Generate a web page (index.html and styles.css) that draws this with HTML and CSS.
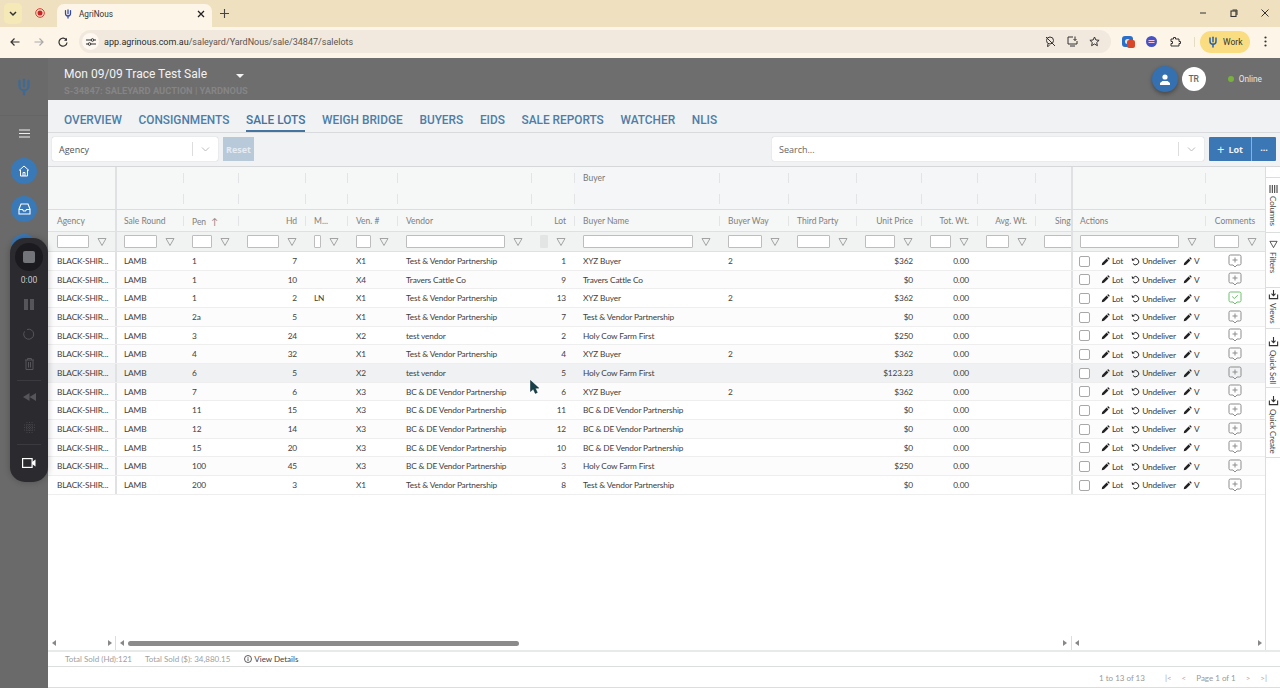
FILE: index.html
```html
<!DOCTYPE html>
<html lang="en">
<head>
<meta charset="utf-8">
<title>AgriNous</title>
<link rel="stylesheet" href="styles.css">
</head>
<body>
<svg class="defs" aria-hidden="true">
  <symbol id="pw" viewBox="0 0 16 16"><path d="M8 1.5v6" fill="none" stroke="currentColor" stroke-width="2" stroke-linecap="round"/><path d="M4 2.5v4.5a4 4 0 0 0 8 0V2.5" fill="none" stroke="currentColor" stroke-width="2" stroke-linecap="round"/><path d="M8 11v3.5" stroke="currentColor" stroke-width="2" stroke-linecap="round"/></symbol>
  <symbol id="pencil" viewBox="0 0 12 12"><path d="M1 11l.6-3 5.9-5.9 2.4 2.4L4 10.4z M8.2 1.4l.8-.7a.8.8 0 0 1 1.1 0l1.2 1.2a.8.8 0 0 1 0 1.1l-.7.8z" fill="currentColor"/></symbol>
  <symbol id="undo" viewBox="0 0 12 12"><path d="M3.2 3.2A4.2 4.2 0 1 1 2.6 8.6" fill="none" stroke="currentColor" stroke-width="1.3"/><path d="M1 1.2l.3 3.7 3.6-.4z" fill="currentColor"/></symbol>
  <symbol id="cmt" viewBox="0 0 14 14"><path d="M2.5 1h9A1.5 1.5 0 0 1 13 2.5v7a1.5 1.5 0 0 1-1.500 1.500H9l-2 2-2-2H2.500A1.500 1.500 0 0 1 1 9.500v-7A1.500 1.500 0 0 1 2.500 1z" fill="none" stroke="currentColor"/><path d="M7 3.500v5M4.500 6h5" stroke="currentColor" fill="none"/></symbol>
  <symbol id="cmtok" viewBox="0 0 14 14"><path d="M2.500 1h9A1.500 1.500 0 0 1 13 2.500v7a1.500 1.500 0 0 1-1.500 1.500H9l-2 2-2-2H2.500A1.500 1.500 0 0 1 1 9.500v-7A1.500 1.500 0 0 1 2.500 1z" fill="none" stroke="currentColor"/><path d="M4.200 5.500L6.300 7.500 9.800 4.200" stroke="currentColor" fill="none"/></symbol>
  <symbol id="fun" viewBox="0 0 10 10"><path d="M1 1.500h8L5 8.500z" fill="none" stroke="currentColor" stroke-width=".9"/></symbol>
  <symbol id="tray" viewBox="0 0 12 12"><path d="M6 1v6M3.800 5L6 7.200 8.200 5" fill="none" stroke="currentColor" stroke-width="1.200"/><path d="M1.500 6v4.500h9V6" fill="none" stroke="currentColor" stroke-width="1.200"/></symbol>
</svg>

<header class="chrome">
  <div class="tabstrip">
    <span class="tabmenu"><svg width="8" height="6" viewBox="0 0 8 6"><path d="M1 1l3 3 3-3" fill="none" stroke="#333" stroke-width="1.500"/></svg></span>
    <span class="rec"><svg width="10" height="10" viewBox="0 0 10 10"><circle cx="5" cy="5" r="4.300" fill="none" stroke="#d33" /><circle cx="5" cy="5" r="2.500" fill="#c8242a"/></svg></span>
    <div class="tab">
      <svg class="tabicon"><use href="#pw"/></svg>
      <span class="tabtitle">AgriNous</span>
      <svg class="tabx" width="8" height="8" viewBox="0 0 8 8"><path d="M1 1l6 6M7 1l-6 6" stroke="#222" stroke-width="1.300"/></svg>
    </div>
    <svg class="newtab" width="9" height="9" viewBox="0 0 9 9"><path d="M4.500 0v9M0 4.500h9" stroke="#444" stroke-width="1.100"/></svg>
    <div class="winbtns">
      <svg width="8" height="8" viewBox="0 0 8 8"><path d="M1 4h6" stroke="#333"/></svg>
      <svg width="8" height="8" viewBox="0 0 8 8"><rect x="1" y="2" width="5" height="5.500" fill="none" stroke="#333" stroke-width="1.100"/><path d="M2.500 1h4.500v5" fill="none" stroke="#333"/></svg>
      <svg width="8" height="8" viewBox="0 0 8 8"><path d="M.5.500l7 7M7.500.500l-7 7" stroke="#333"/></svg>
    </div>
  </div>
  <div class="toolbar">
    <svg class="nb" width="10" height="10" viewBox="0 0 10 10"><path d="M9.500 5H1M4.500 1.500L1 5l3.500 3.500" fill="none" stroke="#333" stroke-width="1.200"/></svg>
    <svg class="nb fwd" width="10" height="10" viewBox="0 0 10 10"><path d="M.500 5H9M5.500 1.500L9 5 5.500 8.500" fill="none" stroke="#aaa" stroke-width="1.200"/></svg>
    <svg class="nb rel" width="10" height="10" viewBox="0 0 10 10"><path d="M8.500 3.200A4 4 0 1 0 9 5.500" fill="none" stroke="#333" stroke-width="1.200"/><path d="M9 .800v3H6z" fill="#333"/></svg>
    <div class="omni">
      <span class="tune"><svg width="10" height="8" viewBox="0 0 10 8"><path d="M0 2h5M8 2h2M0 6h2M5 6h5" stroke="#333"/><circle cx="6.500" cy="2" r="1.300" fill="none" stroke="#333"/><circle cx="3.500" cy="6" r="1.300" fill="none" stroke="#333"/></svg></span>
      <span class="url"><b>app.agrinous.com.au</b>/saleyard/YardNous/sale/34847/salelots</span>
      <span class="omni-icons">
        <svg width="11" height="11" viewBox="0 0 11 11"><circle cx="5" cy="4.500" r="3.500" fill="none" stroke="#333"/><path d="M1 1l9 9M3 8l-.5 2.500 2-1" fill="none" stroke="#333"/></svg>
        <svg width="11" height="11" viewBox="0 0 11 11"><path d="M6 1H1v7h9V5M3 10h5" fill="none" stroke="#333"/><path d="M8 .500v4M6.500 3L8 4.500 9.500 3" fill="none" stroke="#333"/></svg>
        <svg width="11" height="11" viewBox="0 0 11 11"><path d="M5.500 1l1.400 3 3.200.3-2.400 2.200.7 3.200-2.900-1.700-2.900 1.700.7-3.200L.9 4.300 4.100 4z" fill="none" stroke="#333"/></svg>
      </span>
    </div>
    <div class="exts">
      <span class="ext1"><i class="extdot"></i><i class="badge"></i></span>
      <span class="ext2"><svg width="11" height="11" viewBox="0 0 11 11"><path d="M2.500 4.500h6M2.500 6.500h6" stroke="#f3c6d8" stroke-width="1.100"/></svg></span>
      <svg width="11" height="11" viewBox="0 0 11 11"><path d="M1 3h2.500V1.500h2V3H9v2.500h1.500v2H9V10H1V7.500h1.500v-2H1z" fill="none" stroke="#333"/></svg>
      <span class="tbsep"></span>
      <span class="work"><svg width="12" height="14"><use href="#pw"/></svg>Work</span>
      <svg class="dots" width="3" height="11" viewBox="0 0 3 11"><circle cx="1.500" cy="1.500" r="1.100" fill="#333"/><circle cx="1.500" cy="5.500" r="1.100" fill="#333"/><circle cx="1.500" cy="9.500" r="1.100" fill="#333"/></svg>
    </div>
  </div>
</header>

<div class="app">
  <aside class="side">
    <div class="side-logo"><svg width="18" height="20"><use href="#pw"/></svg></div>
    <svg class="burger" width="11" height="9" viewBox="0 0 11 9"><path d="M0 1h11M0 4.500h11M0 8h11" stroke="#eee" stroke-width="1"/></svg>
    <span class="sidebtn"><svg width="12" height="12" viewBox="0 0 12 12"><path d="M1 5.500L6 1l5 4.500M2.500 5v6h7V5M5 11V7.500h2V11" fill="none" stroke="#fff"/></svg></span>
    <span class="sidebtn"><svg width="13" height="12" viewBox="0 0 13 12"><path d="M3 1h7l2 5v5H1V6zM1 6.500h3.500l1 1.500h2l1-1.500H12" fill="none" stroke="#fff" stroke-width="1.100"/></svg></span>
    <span class="sidebtn"></span>
  </aside>

  <main class="main">
    <section class="salehead">
      <div class="saletitle">
        <div class="titleline"><span>Mon 09/09 Trace Test Sale</span><i class="caret"></i></div>
        <div class="subtitle">S-34847: SALEYARD AUCTION | YARDNOUS</div>
      </div>
      <div class="headright">
        <span class="userbtn"><svg width="10" height="11" viewBox="0 0 10 11"><circle cx="5" cy="3" r="2.600" fill="#fff"/><path d="M0 11V9l2.500-2h5L10 9v2z" fill="#fff"/></svg></span>
        <span class="avatar">TR</span>
        <span class="online"><i></i>Online</span>
      </div>
    </section>

    <nav class="nav">
      <a>OVERVIEW</a><a>CONSIGNMENTS</a><a class="on">SALE LOTS</a><a>WEIGH BRIDGE</a><a>BUYERS</a><a>EIDS</a><a>SALE REPORTS</a><a>WATCHER</a><a>NLIS</a>
    </nav>

    <section class="filterbar">
      <div class="select agency"><span>Agency</span><i class="vs"></i><svg width="9" height="5" viewBox="0 0 9 5"><path d="M1 .500l3.500 3.500L8 .500" fill="none" stroke="#bbb"/></svg></div>
      <button class="reset">Reset</button>
      <div class="select search"><span>Search...</span><i class="vs"></i><svg width="9" height="5" viewBox="0 0 9 5"><path d="M1 .500l3.500 3.500L8 .500" fill="none" stroke="#bbb"/></svg></div>
      <div class="lotbtn"><span class="lotmain"><b class="plus">+</b> Lot</span><span class="lotmore">···</span></div>
    </section>

    <section class="gridwrap">
      <div class="gridarea">
        <div class="r g1">
          <div></div><div></div><div class="s"></div><div class="s"></div><div class="s"></div><div class="s"></div><div class="s"></div><div class="s"></div><div class="s buy">Buyer</div><div class="s buy"></div><div class="s buy"></div><div class="s buy"></div><div class="s buy"></div><div class="s buy"></div><div class="s buy"></div><div></div><div class="s"></div>
        </div>
        <div class="r g2">
          <div></div><div></div><div class="s"></div><div class="s"></div><div class="s"></div><div class="s"></div><div class="s"></div><div class="s"></div><div class="s buy"></div><div class="s buy"></div><div class="s buy"></div><div class="s buy"></div><div class="s buy"></div><div class="s buy"></div><div class="s buy"></div><div></div><div class="s"></div>
        </div>
        <div class="r hd">
          <div class="c">Agency</div><div class="c">Sale Round</div><div class="c s">Pen <span class="arrow">↑</span></div><div class="c s n">Hd</div><div class="c s">M...</div><div class="c s">Ven. #</div><div class="c s">Vendor</div><div class="c s n">Lot</div><div class="c s">Buyer Name</div><div class="c s">Buyer Way</div><div class="c s">Third Party</div><div class="c s n">Unit Price</div><div class="c s n">Tot. Wt.</div><div class="c s n">Avg. Wt.</div><div class="c s clip">Sing</div><div class="c">Actions</div><div class="c s ctr">Comments</div>
        </div>
        <div class="r fl">
          <div class="f"><input><svg><use href="#fun"/></svg></div><div class="f"><input><svg><use href="#fun"/></svg></div><div class="f"><input><svg><use href="#fun"/></svg></div><div class="f"><input><svg><use href="#fun"/></svg></div><div class="f"><input><svg><use href="#fun"/></svg></div><div class="f"><input><svg><use href="#fun"/></svg></div><div class="f"><input><svg><use href="#fun"/></svg></div><div class="f lotf"><input><svg><use href="#fun"/></svg></div><div class="f"><input><svg><use href="#fun"/></svg></div><div class="f"><input><svg><use href="#fun"/></svg></div><div class="f"><input><svg><use href="#fun"/></svg></div><div class="f"><input><svg><use href="#fun"/></svg></div><div class="f"><input><svg><use href="#fun"/></svg></div><div class="f"><input><svg><use href="#fun"/></svg></div><div class="f sing"><input></div><div class="f"><input><svg><use href="#fun"/></svg></div><div class="f"><input><svg><use href="#fun"/></svg></div>
        </div>

        <div class="r row"><div class="c">BLACK-SHIR...</div><div class="c">LAMB</div><div class="c">1</div><div class="c n">7</div><div class="c"></div><div class="c">X1</div><div class="c">Test &amp; Vendor Partnership</div><div class="c n">1</div><div class="c">XYZ Buyer</div><div class="c">2</div><div class="c"></div><div class="c n">$362</div><div class="c n">0.00</div><div class="c"></div><div class="c"></div><div class="a"><i class="cb"></i><svg class="p1"><use href="#pencil"/></svg>Lot<svg class="u"><use href="#undo"/></svg>Undeliver<svg class="p2"><use href="#pencil"/></svg>V</div><div class="m"><svg><use href="#cmt"/></svg></div></div>
        <div class="r row"><div class="c">BLACK-SHIR...</div><div class="c">LAMB</div><div class="c">1</div><div class="c n">10</div><div class="c"></div><div class="c">X4</div><div class="c">Travers Cattle Co</div><div class="c n">9</div><div class="c">Travers Cattle Co</div><div class="c"></div><div class="c"></div><div class="c n">$0</div><div class="c n">0.00</div><div class="c"></div><div class="c"></div><div class="a"><i class="cb"></i><svg class="p1"><use href="#pencil"/></svg>Lot<svg class="u"><use href="#undo"/></svg>Undeliver<svg class="p2"><use href="#pencil"/></svg>V</div><div class="m"><svg><use href="#cmt"/></svg></div></div>
        <div class="r row"><div class="c">BLACK-SHIR...</div><div class="c">LAMB</div><div class="c">1</div><div class="c n">2</div><div class="c">LN</div><div class="c">X1</div><div class="c">Test &amp; Vendor Partnership</div><div class="c n">13</div><div class="c">XYZ Buyer</div><div class="c">2</div><div class="c"></div><div class="c n">$362</div><div class="c n">0.00</div><div class="c"></div><div class="c"></div><div class="a"><i class="cb"></i><svg class="p1"><use href="#pencil"/></svg>Lot<svg class="u"><use href="#undo"/></svg>Undeliver<svg class="p2"><use href="#pencil"/></svg>V</div><div class="m ok"><svg><use href="#cmtok"/></svg></div></div>
        <div class="r row"><div class="c">BLACK-SHIR...</div><div class="c">LAMB</div><div class="c">2a</div><div class="c n">5</div><div class="c"></div><div class="c">X1</div><div class="c">Test &amp; Vendor Partnership</div><div class="c n">7</div><div class="c">Test &amp; Vendor Partnership</div><div class="c"></div><div class="c"></div><div class="c n">$0</div><div class="c n">0.00</div><div class="c"></div><div class="c"></div><div class="a"><i class="cb"></i><svg class="p1"><use href="#pencil"/></svg>Lot<svg class="u"><use href="#undo"/></svg>Undeliver<svg class="p2"><use href="#pencil"/></svg>V</div><div class="m"><svg><use href="#cmt"/></svg></div></div>
        <div class="r row"><div class="c">BLACK-SHIR...</div><div class="c">LAMB</div><div class="c">3</div><div class="c n">24</div><div class="c"></div><div class="c">X2</div><div class="c">test vendor</div><div class="c n">2</div><div class="c">Holy Cow Farm First</div><div class="c"></div><div class="c"></div><div class="c n">$250</div><div class="c n">0.00</div><div class="c"></div><div class="c"></div><div class="a"><i class="cb"></i><svg class="p1"><use href="#pencil"/></svg>Lot<svg class="u"><use href="#undo"/></svg>Undeliver<svg class="p2"><use href="#pencil"/></svg>V</div><div class="m"><svg><use href="#cmt"/></svg></div></div>
        <div class="r row"><div class="c">BLACK-SHIR...</div><div class="c">LAMB</div><div class="c">4</div><div class="c n">32</div><div class="c"></div><div class="c">X1</div><div class="c">Test &amp; Vendor Partnership</div><div class="c n">4</div><div class="c">XYZ Buyer</div><div class="c">2</div><div class="c"></div><div class="c n">$362</div><div class="c n">0.00</div><div class="c"></div><div class="c"></div><div class="a"><i class="cb"></i><svg class="p1"><use href="#pencil"/></svg>Lot<svg class="u"><use href="#undo"/></svg>Undeliver<svg class="p2"><use href="#pencil"/></svg>V</div><div class="m"><svg><use href="#cmt"/></svg></div></div>
        <div class="r row hover"><div class="c">BLACK-SHIR...</div><div class="c">LAMB</div><div class="c">6</div><div class="c n">5</div><div class="c"></div><div class="c">X2</div><div class="c">test vendor</div><div class="c n">5</div><div class="c">Holy Cow Farm First</div><div class="c"></div><div class="c"></div><div class="c n">$123.23</div><div class="c n">0.00</div><div class="c"></div><div class="c"></div><div class="a"><i class="cb"></i><svg class="p1"><use href="#pencil"/></svg>Lot<svg class="u"><use href="#undo"/></svg>Undeliver<svg class="p2"><use href="#pencil"/></svg>V</div><div class="m"><svg><use href="#cmt"/></svg></div></div>
        <div class="r row"><div class="c">BLACK-SHIR...</div><div class="c">LAMB</div><div class="c">7</div><div class="c n">6</div><div class="c"></div><div class="c">X3</div><div class="c">BC &amp; DE Vendor Partnership</div><div class="c n">6</div><div class="c">XYZ Buyer</div><div class="c">2</div><div class="c"></div><div class="c n">$362</div><div class="c n">0.00</div><div class="c"></div><div class="c"></div><div class="a"><i class="cb"></i><svg class="p1"><use href="#pencil"/></svg>Lot<svg class="u"><use href="#undo"/></svg>Undeliver<svg class="p2"><use href="#pencil"/></svg>V</div><div class="m"><svg><use href="#cmt"/></svg></div></div>
        <div class="r row"><div class="c">BLACK-SHIR...</div><div class="c">LAMB</div><div class="c">11</div><div class="c n">15</div><div class="c"></div><div class="c">X3</div><div class="c">BC &amp; DE Vendor Partnership</div><div class="c n">11</div><div class="c">BC &amp; DE Vendor Partnership</div><div class="c"></div><div class="c"></div><div class="c n">$0</div><div class="c n">0.00</div><div class="c"></div><div class="c"></div><div class="a"><i class="cb"></i><svg class="p1"><use href="#pencil"/></svg>Lot<svg class="u"><use href="#undo"/></svg>Undeliver<svg class="p2"><use href="#pencil"/></svg>V</div><div class="m"><svg><use href="#cmt"/></svg></div></div>
        <div class="r row"><div class="c">BLACK-SHIR...</div><div class="c">LAMB</div><div class="c">12</div><div class="c n">14</div><div class="c"></div><div class="c">X3</div><div class="c">BC &amp; DE Vendor Partnership</div><div class="c n">12</div><div class="c">BC &amp; DE Vendor Partnership</div><div class="c"></div><div class="c"></div><div class="c n">$0</div><div class="c n">0.00</div><div class="c"></div><div class="c"></div><div class="a"><i class="cb"></i><svg class="p1"><use href="#pencil"/></svg>Lot<svg class="u"><use href="#undo"/></svg>Undeliver<svg class="p2"><use href="#pencil"/></svg>V</div><div class="m"><svg><use href="#cmt"/></svg></div></div>
        <div class="r row"><div class="c">BLACK-SHIR...</div><div class="c">LAMB</div><div class="c">15</div><div class="c n">20</div><div class="c"></div><div class="c">X3</div><div class="c">BC &amp; DE Vendor Partnership</div><div class="c n">10</div><div class="c">BC &amp; DE Vendor Partnership</div><div class="c"></div><div class="c"></div><div class="c n">$0</div><div class="c n">0.00</div><div class="c"></div><div class="c"></div><div class="a"><i class="cb"></i><svg class="p1"><use href="#pencil"/></svg>Lot<svg class="u"><use href="#undo"/></svg>Undeliver<svg class="p2"><use href="#pencil"/></svg>V</div><div class="m"><svg><use href="#cmt"/></svg></div></div>
        <div class="r row"><div class="c">BLACK-SHIR...</div><div class="c">LAMB</div><div class="c">100</div><div class="c n">45</div><div class="c"></div><div class="c">X3</div><div class="c">BC &amp; DE Vendor Partnership</div><div class="c n">3</div><div class="c">Holy Cow Farm First</div><div class="c"></div><div class="c"></div><div class="c n">$250</div><div class="c n">0.00</div><div class="c"></div><div class="c"></div><div class="a"><i class="cb"></i><svg class="p1"><use href="#pencil"/></svg>Lot<svg class="u"><use href="#undo"/></svg>Undeliver<svg class="p2"><use href="#pencil"/></svg>V</div><div class="m"><svg><use href="#cmt"/></svg></div></div>
        <div class="r row"><div class="c">BLACK-SHIR...</div><div class="c">LAMB</div><div class="c">200</div><div class="c n">3</div><div class="c"></div><div class="c">X1</div><div class="c">Test &amp; Vendor Partnership</div><div class="c n">8</div><div class="c">Test &amp; Vendor Partnership</div><div class="c"></div><div class="c"></div><div class="c n">$0</div><div class="c n">0.00</div><div class="c"></div><div class="c"></div><div class="a"><i class="cb"></i><svg class="p1"><use href="#pencil"/></svg>Lot<svg class="u"><use href="#undo"/></svg>Undeliver<svg class="p2"><use href="#pencil"/></svg>V</div><div class="m"><svg><use href="#cmt"/></svg></div></div>

        <div class="gridspace"></div>
        <div class="hscroll">
          <div class="hs left"><i class="al"></i><i class="ar"></i></div>
          <div class="hs center"><i class="al"></i><span class="thumbtrack"><span class="thumb"></span></span><i class="ar"></i></div>
          <div class="hs right"><i class="al"></i><i class="ar"></i></div>
        </div>
      </div>
      <aside class="sidetabs">
        <div class="st st1"><svg class="sticon" width="9" height="8" viewBox="0 0 9 8"><path d="M1 0v8M3.300 0v8M5.700 0v8M8 0v8" stroke="#333"/></svg><span>Columns</span></div>
        <div class="st st2"><svg class="sticon" width="9" height="9"><use href="#fun"/></svg><span>Filters</span></div>
        <div class="st st3"><svg class="sticon" width="11" height="11"><use href="#tray"/></svg><span>Views</span></div>
        <div class="st st4"><svg class="sticon" width="11" height="11"><use href="#tray"/></svg><span>Quick Sell</span></div>
        <div class="st st5"><svg class="sticon" width="11" height="11"><use href="#tray"/></svg><span>Quick Create</span></div>
      </aside>
    </section>

    <section class="totals">
      <span>Total Sold (Hd):121</span><span class="t2">Total Sold ($): 34,880.15</span>
      <span class="details"><svg width="8" height="8" viewBox="0 0 8 8"><circle cx="4" cy="4" r="3.500" fill="none" stroke="#333" stroke-width=".8"/><path d="M4 3.300V6M4 2v.8" stroke="#333" stroke-width=".8"/></svg>View Details</span>
    </section>
    <section class="pager">
      <span>1 to 13 of 13</span>
      <span class="pg first">|&lt;</span><span class="pg">&lt;</span><span class="ptext">Page 1 of 1</span><span class="pg">&gt;</span><span class="pg">&gt;|</span>
    </section>
  </main>
</div>

<div class="recorder">
  <span class="stopwrap"><i class="stop"></i></span>
  <span class="time">0:00</span>
  <span class="rslot"><svg width="10" height="11" viewBox="0 0 10 11"><path d="M0 0h4v11H0zM6 0h4v11H6z" fill="#55555a"/></svg></span>
  <span class="rslot"><svg width="12" height="12" viewBox="0 0 12 12"><path d="M4 1.500a5 5 0 1 1-2.500 2" fill="none" stroke="#55555a"/></svg></span>
  <span class="rslot"><svg width="11" height="12" viewBox="0 0 11 12"><path d="M1 2h9M3.500 2V.500h4V2M2 2v9.500h7V2M4.500 4v5.500M6.500 4v5.500" fill="none" stroke="#55555a"/></svg></span>
  <i class="rdiv"></i>
  <span class="rslot"><svg width="13" height="8" viewBox="0 0 13 8"><path d="M6.500 0v8L0 4zM13 0v8L6.500 4z" fill="#55555a"/></svg></span>
  <span class="rslot"><svg width="11" height="11" viewBox="0 0 11 11"><path d="M3 0v11M5.500 0v11M8 0v11M0 3h11M0 5.500h11M0 8h11" stroke="#44444a" stroke-dasharray="1 1"/></svg></span>
  <i class="rdiv low"></i>
  <span class="rslot"><svg width="14" height="10" viewBox="0 0 14 10"><rect x=".6" y=".6" width="9.500" height="8.800" fill="none" stroke="#fff" stroke-width="1.200"/><path d="M10 4l3.500-2.500v7L10 6z" fill="#fff"/></svg></span>
</div>

<svg class="cursor" width="9" height="14" viewBox="0 0 9 14"><path d="M.5.500v11l2.800-2.400 2 4.300 2-.9-2-4.200 3.500-.2z" fill="#17404a" stroke="#0d2a30" stroke-width=".5"/></svg>
</body>
</html>
```

FILE: styles.css
```css
* { box-sizing: border-box; }
html, body { margin: 0; height: 688px; overflow: hidden; }
body { font-family: "Lato", "Open Sans", sans-serif; font-size: 8.5px; color: #3d3d3d; background: #fff; position: relative; }
.defs { width: 0; height: 0; position: absolute; }
i { display: block; font-style: normal; }

/* browser chrome */
.chrome { height: 58px; display: flex; flex-direction: column; }
.tabstrip { height: 27px; background: #efe1bf; display: flex; align-items: flex-start; }
.tabmenu { width: 18px; height: 21px; margin: 3px 0 0 4px; border-radius: 5px; background: #f5e9b8; display: flex; align-items: center; justify-content: center; }
.rec { width: 10px; height: 10px; margin: 8px 0 0 13px; display: flex; }
.tab { width: 155px; height: 23px; margin: 4px 0 0 12px; background: #fdf5e8; border-radius: 7px 7px 0 0; display: flex; align-items: center; padding: 0 7px 4px 6px; font-family: "Roboto", sans-serif; font-size: 8.200px; color: #333; }
.tabicon { width: 10px; height: 12px; color: #3046a8; margin-right: 6px; }
.tabtitle { flex: 1; }
.newtab { margin: 9px 0 0 8px; }
.winbtns { margin-left: auto; display: flex; gap: 23px; padding: 9px 11px 0 0; }
.toolbar { height: 31px; background: #fdf5e8; display: flex; align-items: center; padding: 0 0 2px 10px; }
.nb { flex: none; }
.fwd { margin-left: 14px; }
.rel { margin-left: 14px; }
.omni { width: 1032px; height: 23px; margin-left: 11px; border-radius: 12px; background: #f2e9de; display: flex; align-items: center; padding: 0 11px 0 3px; }
.tune { width: 17px; height: 17px; border-radius: 50%; background: #fdf8f0; display: flex; align-items: center; justify-content: center; }
.url { margin-left: 5px; font-family: "Roboto", sans-serif; font-size: 9px; color: #5a5650; white-space: nowrap; }
.url b { font-weight: 400; color: #2b2b2b; }
.omni-icons { margin-left: auto; display: flex; gap: 11px; }
.exts { display: flex; align-items: center; margin-left: 11px; }
.ext1 { width: 11px; height: 11px; border-radius: 3px; background: #2b6fc8; position: relative; display: flex; align-items: center; justify-content: center; }
.extdot { width: 5px; height: 5px; border-radius: 50%; background: #dfeafa; }
.badge { width: 8px; height: 8px; border-radius: 2px; background: #d8472a; position: absolute; left: 5px; top: 4px; }
.ext2 { width: 11px; height: 11px; border-radius: 50%; background: #4552c8; margin: 0 13px; display: flex; }
.tbsep { width: 1px; height: 10px; background: #e6dcc4; margin: 0 5px 0 13px; }
.work { width: 50px; height: 22px; border-radius: 11px; background: #f9dd80; display: flex; align-items: center; gap: 4px; padding-left: 7px; font-family: "Roboto", sans-serif; font-size: 8.500px; color: #333; }
.work svg { color: #2b62a8; }
.dots { margin-left: 14px; }

/* app frame */
.app { height: 630px; display: flex; }
.side { width: 48px; flex: none; background: #6a6a6a; display: flex; flex-direction: column; align-items: center; }
.side-logo { width: 48px; height: 58px; border-bottom: 1px solid #656565; display: flex; align-items: center; justify-content: center; color: #3f6a93; }
.burger { margin: 13px 0 20px; }
.sidebtn { width: 26px; height: 26px; border-radius: 50%; background: #3a79b8; display: flex; align-items: center; justify-content: center; margin-bottom: 12px; flex: none; }
.main { flex: 1; min-width: 0; display: flex; flex-direction: column; background: #fff; }

/* sale header */
.salehead { height: 42px; background: #6e6e6e; display: flex; justify-content: space-between; padding: 8px 0 0 16px; flex: none; }
.titleline { display: flex; align-items: center; color: #f3f3f3; font-family: "Roboto", sans-serif; font-size: 12px; line-height: 17px; }
.caret { width: 0; height: 0; border: 4px solid transparent; border-top: 4px solid #f5f5f5; border-bottom: 0; margin: 2px 0 0 29px; }
.subtitle { color: #858585; font-family: "Roboto", sans-serif; font-weight: 700; font-size: 9.300px; line-height: 13px; margin-top: 1px; }
.headright { display: flex; align-items: flex-start; padding-right: 18px; }
.userbtn { width: 26px; height: 26px; border-radius: 50%; background: #3570b0; display: flex; align-items: center; justify-content: center; box-shadow: 0 2px 4px rgba(0,0,0,.35); }
.avatar { width: 24px; height: 24px; margin: 1px 0 0 4px; border-radius: 50%; background: #fff; color: #666; font-family: "Roboto", sans-serif; font-weight: 500; font-size: 8.500px; display: flex; align-items: center; justify-content: center; }
.online { display: flex; align-items: center; height: 26px; margin-left: 22px; color: #e8e8e8; font-family: "Roboto", sans-serif; font-size: 8.300px; gap: 5px; }
.online i { width: 6px; height: 6px; border-radius: 50%; background: #7ab03e; }

/* nav */
.nav { height: 33px; flex: none; background: #f1f2f3; border-bottom: 1px solid #d9dadb; display: flex; gap: 16.700px; padding-left: 16px; }
.nav a { font-family: "Roboto", sans-serif; font-weight: 500; font-size: 11.850px; color: #4d7da8; line-height: 41px; height: 32px; }
.nav a.on { border-bottom: 2px solid #44749f; color: #44749f; }

/* filter bar */
.filterbar { height: 34px; flex: none; background: #f1f2f3; border-bottom: 1px solid #d6d7d8; display: flex; align-items: center; padding: 0 4px 1px; }
.select { height: 24px; background: #fff; border-radius: 2px; box-shadow: 0 0 1px rgba(0,0,0,.3); display: flex; align-items: center; padding: 0 8px 0 7px; font-family: "Open Sans", sans-serif; font-size: 9px; color: #666; }
.select span { flex: 1; }
.vs { width: 1px; height: 14px; background: #ddd; margin-right: 8px; }
.agency { width: 166px; color: #555; }
.reset { width: 31px; height: 24px; margin-left: 5px; border: 0; padding: 0; background: #b8c9da; color: #e4ebf3; font-family: "Open Sans", sans-serif; font-weight: 700; font-size: 9px; }
.search { width: 432px; margin-left: 518px; }
.lotbtn { margin-left: 5px; width: 67px; height: 24px; background: #3c77b5; color: #eef3f8; display: flex; font-family: "Open Sans", sans-serif; font-weight: 700; font-size: 9px; border-radius: 1px; }
.lotmain { width: 43px; display: flex; align-items: center; justify-content: center; gap: 4px; border-right: 1px solid #8fb0d0; }
.plus { font-weight: 400; font-size: 13px; line-height: 12px; }
.lotmore { flex: 1; display: flex; align-items: center; justify-content: center; font-size: 9px; }

/* grid */
.gridwrap { flex: 1; min-height: 0; display: flex; border-bottom: 2px solid #e8e9e9; }
.gridarea { flex: 1; min-width: 0; display: flex; flex-direction: column; }
.r { display: grid; grid-template-columns: 67px 68px 55px 67px 42px 50px 134px 43px 145px 69px 68px 65px 56px 58px 36px 134px 60px; flex: none; }
.r > :nth-child(2), .r > :nth-child(16) { box-shadow: inset 2px 0 #dfe1e2; }
.g1, .g2 { height: 21px; background-color: #f6f7f7; color: #777; }
.g1 { height: 21px; }
.s { background-image: linear-gradient(#e3e4e5, #e3e4e5); background-size: 1px 10px; background-position: 0 center; background-repeat: no-repeat; }
.buy { background-color: #f5f6f7; padding-left: 9px; line-height: 22px; }
.g2 { border-bottom: 1px solid #dcdddd; height: 22px; }
.hd { height: 22px; background-color: #f6f7f7; border-bottom: 1px solid #dfe0e0; color: #808080; }
.c { padding: 0 9px; line-height: 19.500px; white-space: nowrap; overflow: hidden; }
.hd .c { line-height: 23px; }
.row .c, .a { font-size: 8.300px; letter-spacing: -.15px; }
.n { text-align: right; padding-right: 8px; }
.ctr { text-align: center; }
.clip { padding: 0 0 0 20px; }
.arrow { margin-left: 3px; font-size: 9px; }
.fl { height: 20px; background: #f1f2f2; border-bottom: 1px solid #dfe0e0; }
.f { display: flex; align-items: center; padding: 0 8px 0 9px; gap: 8px; overflow: hidden; min-width: 0; }
.f input { flex: 1; min-width: 0; width: 0; height: 13px; padding: 0; border: 1px solid #bdbdbd; border-radius: 1px; background: #fff; }
.f svg { flex: none; width: 10px; height: 10px; color: #9a9a9a; }
.lotf input { background: #e3e4e4; border-color: #e3e4e4; }
.sing { padding-right: 0; }
.sing input { flex: none; width: 40px; }
.row { height: 18.670px; background: #fff; border-bottom: 1px solid #eeeeee; color: #404040; }
.row:nth-of-type(even) { background: #fcfcfc; }
.row.hover { background: #eff1f2; }
.a { display: flex; align-items: center; padding: 1px 0 0 8px; white-space: nowrap; color: #3a3a3a; overflow: hidden; }
.cb { width: 11px; height: 11px; border: 1px solid #a8a8a8; border-radius: 2px; background: #fff; flex: none; margin-right: 11px; }
.a svg { width: 9px; height: 9px; flex: none; margin-right: 2px; color: #222; }
.a .u { margin-left: 8px; }
.a .p2 { margin-left: 7px; }
.m { display: flex; align-items: center; justify-content: center; color: #8d8d8d; }
.m svg { width: 14px; height: 14px; }
.m.ok { color: #6cc06c; }
.gridspace { flex: 1; }
.hscroll { height: 14px; flex: none; display: flex; align-items: center; }
.hs { display: flex; align-items: center; justify-content: space-between; height: 14px; }
.hs.left { width: 67px; padding: 0 3px 0 4px; }
.hs.center { width: 956px; padding: 0 4px; border-left: 1px solid #ddd; }
.hs.right { width: 194px; padding: 0 3px; border-left: 1px solid #ddd; }
.al, .ar { width: 0; height: 0; border: 3px solid transparent; flex: none; }
.al { border-right: 4px solid #888; border-left: 0; }
.ar { border-left: 4px solid #888; border-right: 0; }
.thumbtrack { flex: 1; padding: 0 4px; }
.thumb { display: block; width: 391px; height: 5px; border-radius: 3px; background: #8b8b8b; }

/* side tabs */
.sidetabs { width: 15px; flex: none; border-left: 1px solid #dcdddd; display: flex; flex-direction: column; padding-top: 10px; }
.st { display: flex; flex-direction: column; align-items: center; border-top: 1px solid #dcdddd; gap: 3px; color: #444; flex: none; font-size: 8px; letter-spacing: -.1px; }
.st span { writing-mode: vertical-rl; white-space: nowrap; }
.sticon { flex: none; color: #333; }
.st1 { height: 55px; padding-top: 7px; }
.st2 { height: 55px; padding-top: 7px; }
.st3 { height: 41px; padding-top: 1px; }
.st4 { height: 59px; padding-top: 7px; }
.st5 { height: 71px; padding-top: 7px; border-bottom: 1px solid #dcdddd; }

/* footer */
.totals { height: 15px; flex: none; border-bottom: 1px solid #dcdddd; display: flex; align-items: center; padding: 0 0 1px 17px; color: #a0a0a0; font-size: 8px; }
.t2 { margin-left: 13px; }
.details { margin-left: 14px; display: flex; align-items: center; gap: 2px; color: #444; }
.pager { height: 21px; flex: none; border-bottom: 1px solid #dcdddd; display: flex; align-items: center; justify-content: flex-end; padding: 1px 13px 0 0; color: #999; font-size: 8px; }
.pg { margin-left: 10px; color: #aaa; }
.first { margin-left: 20px; }
.ptext { margin-left: 10px; }

/* floating screen-recorder pill and pointer */
.recorder { position: absolute; left: 10px; top: 238px; width: 38px; height: 244px; border-radius: 15px; background: #2a2a2f; display: flex; flex-direction: column; align-items: center; padding-top: 5px; box-shadow: 0 0 6px rgba(0,0,0,.25); }
.stopwrap { width: 28px; height: 28px; border-radius: 50%; background: #1b1b1f; display: flex; align-items: center; justify-content: center; flex: none; }
.stop { width: 12px; height: 12px; border-radius: 2px; background: #73737a; }
.time { color: #c9c9cb; font-family: "Roboto", sans-serif; font-size: 8.500px; line-height: 12px; margin: 3px 0 3px; }
.rslot { height: 30px; display: flex; align-items: center; justify-content: center; flex: none; }
.rdiv { width: 24px; height: 1px; background: #3a3a40; margin: 1px 0; flex: none; }
.rdiv.low { margin: 2px 0 3px; }
.cursor { position: absolute; left: 530px; top: 380px; }
```
